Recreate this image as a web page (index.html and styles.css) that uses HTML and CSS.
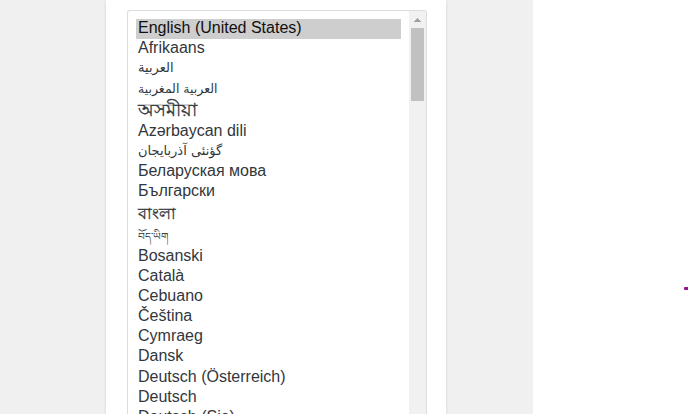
FILE: index.html
```
<!DOCTYPE html>
<html lang="en">
<head>
<meta charset="utf-8">
<title>Installation</title>
<link rel="stylesheet" href="styles.css">
</head>
<body>
<div class="page">
	<div class="setup">
		<div class="language">
			<ul class="list">
				<li class="selected">English (United States)</li>
				<li>Afrikaans</li>
				<li class="arabic">العربية</li>
				<li class="arabic maghreb">العربية المغربية</li>
				<li class="indic assamese">অসমীয়া</li>
				<li>Azərbaycan dili</li>
				<li class="arabic">گؤنئی آذربایجان</li>
				<li>Беларуская мова</li>
				<li>Български</li>
				<li class="indic bangla">বাংলা</li>
				<li class="tibetan">བོད་ཡིག</li>
				<li>Bosanski</li>
				<li>Català</li>
				<li>Cebuano</li>
				<li>Čeština</li>
				<li>Cymraeg</li>
				<li class="tall">Dansk</li>
				<li>Deutsch (Österreich)</li>
				<li>Deutsch</li>
				<li>Deutsch (Sie)</li>
			</ul>
			<div class="scrollbar">
				<svg class="arrow" width="17" height="17" viewBox="0 0 17 17" shape-rendering="crispEdges"><path d="M8 7h1v1h1v1h1v1h1v1H5v-1h1V9h1V8h1z" fill="#a3a3a3"/></svg>
				<div class="thumb"></div>
			</div>
		</div>
	</div>
</div>
<div class="aside"><span class="mark"></span></div>
</body>
</html>
```

FILE: styles.css
```
body {
	margin: 0;
	display: flex;
	height: 414px;
	overflow: hidden;
	background: #fff;
	font-family: "Liberation Sans", Arial, "Noto Sans", sans-serif;
	font-size: 16px;
	color: #32373c;
}
.page {
	width: 533px;
	background: #f0f0f0;
	display: flex;
}
.setup {
	box-sizing: border-box;
	width: 340px;
	height: 414px;
	margin-left: 106px;
	padding: 10px 19px 0 21px;
	background: #fff;
	box-shadow: 0 1px 3px rgba(0,0,0,.13);
}
.language {
	box-sizing: border-box;
	width: 300px;
	height: 404px;
	border: 1px solid #ddd;
	border-bottom: 0;
	border-radius: 3px 3px 0 0;
	display: flex;
	overflow: hidden;
}
.list {
	width: 265px;
	margin: 0;
	padding: 8px;
	list-style: none;
}
.list li {
	height: 20px;
	line-height: 17px;
	padding-left: 2px;
	white-space: nowrap;
}
.list .selected {
	background: #cecece;
	color: #101010;
}
.list .arabic {
	font-family: "DejaVu Sans", sans-serif;
	font-size: 13px;
}
.list .maghreb {
	height: 21px;
	line-height: 19px;
	font-size: 12.5px;
}
.list .indic {
	height: 22px;
	line-height: 21px;
	-webkit-text-stroke: .3px;
}
.list .assamese {
	font-size: 17.5px;
}
.list .bangla {
	height: 24px;
	line-height: 23px;
	font-size: 15.5px;
}
.list .tibetan {
	height: 21px;
	line-height: 21px;
	font-size: 10.5px;
}
.list .tall {
	height: 21px;
}
.scrollbar {
	width: 17px;
	background: #f1f1f1;
}
.arrow {
	display: block;
}
.thumb {
	width: 13px;
	height: 73px;
	margin-left: 2px;
	background: #c1c1c1;
}
.aside {
	flex: 1;
	display: flex;
	justify-content: flex-end;
}
.mark {
	width: 4px;
	height: 3px;
	margin-top: 287px;
	border-radius: 1px 0 0 1px;
	background: #931593;
}
```
